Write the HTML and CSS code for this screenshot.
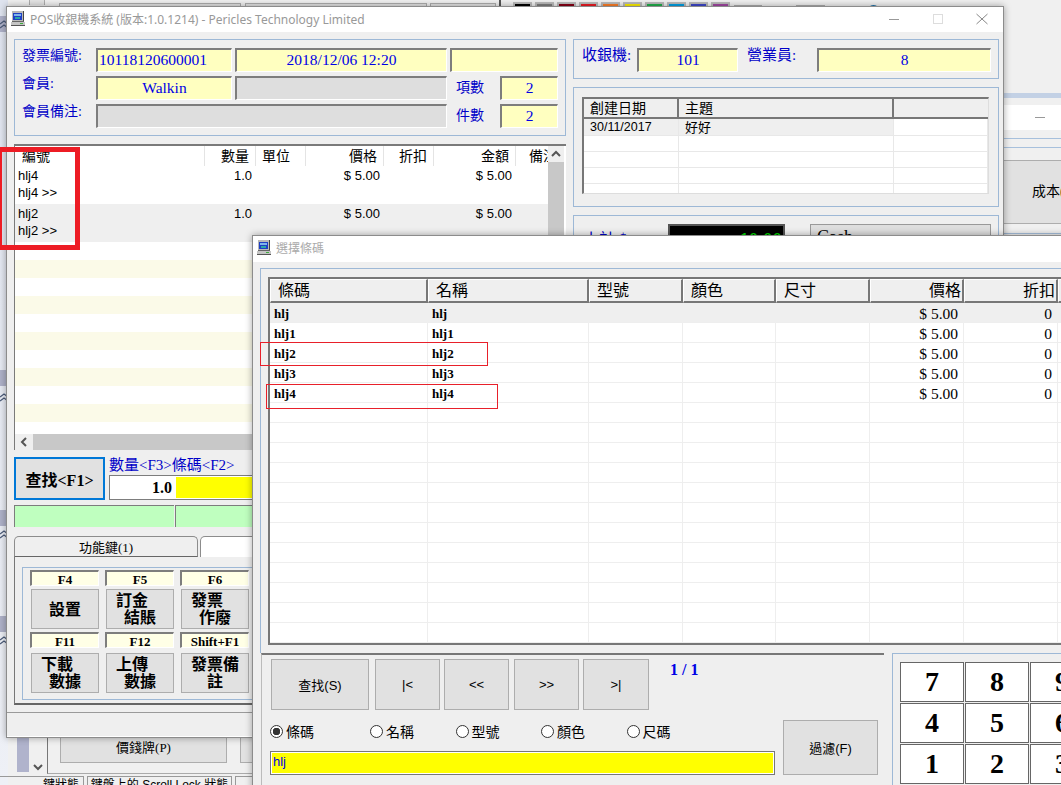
FILE: index.html
```html
<!DOCTYPE html>
<html lang="zh-Hant">

<head>
    <meta charset="UTF-8">
    <title>POS收銀機系統</title>
    <link rel="stylesheet" href="styles.css">
</head>

<body>
    <div class="desktop">

        <!-- Ventana de fondo -->
        <div class="bg-top">
            <span class="bg-box bg-chev"></span>
            <span class="bg-box bg-b1"></span>
            <span class="bg-box bg-b2"></span>
            <span class="bg-box bg-b3"></span>
            <span class="bg-divider"></span>
            <div class="swatches">
                <i style="background:#000"></i><i style="background:#7f7f7f"></i><i style="background:#880015"></i><i style="background:#ed1c24"></i><i style="background:#ff7f27"></i><i style="background:#fff200"></i><i style="background:#22b14c"></i><i style="background:#00a2e8"></i><i style="background:#3f48cc"></i><i style="background:#a349a4"></i>
            </div>
            <span class="bg-box bg-b4"></span>
            <span class="bg-box bg-b5"></span>
            <span class="bg-dot"></span>
        </div>

        <div class="bg-left">
            <span class="bg-band band-1"></span>
            <span class="bg-band band-2"></span>
            <span class="bg-band band-3"></span>
            <span class="bg-band band-4"></span>
            <svg class="bg-chevs chev-1" width="8" height="10" viewBox="0 0 8 10"><path d="M0 4 L4 1 L8 4 M0 8 L4 5 L8 8" fill="none" stroke="#4a5a78" stroke-width="1.2" /></svg>
            <svg class="bg-chevs chev-2" width="8" height="10" viewBox="0 0 8 10"><path d="M0 4 L4 1 L8 4 M0 8 L4 5 L8 8" fill="none" stroke="#4a5a78" stroke-width="1.2" /></svg>
            <svg class="bg-chevs chev-3" width="8" height="10" viewBox="0 0 8 10"><path d="M0 4 L4 1 L8 4 M0 8 L4 5 L8 8" fill="none" stroke="#4a5a78" stroke-width="1.2" /></svg>
            <svg class="bg-chevs chev-4" width="8" height="10" viewBox="0 0 8 10"><path d="M0 4 L4 1 L8 4 M0 8 L4 5 L8 8" fill="none" stroke="#4a5a78" stroke-width="1.2" /></svg>
        </div>

        <div class="bg-right">
            <div class="bg-right-stripe"></div>
            <div class="bg-right-title"><span class="bg-min"></span></div>
            <div class="bg-right-lines"></div>
            <div class="bg-right-button">成本(C)</div>
            <div class="bg-right-line"></div>
        </div>

        <div class="bg-bottom">
            <span class="bg-scroll"></span>
            <svg class="bg-scroll-arrow" width="10" height="8" viewBox="0 0 10 8"><polyline points="1,2 5,6 9,2" fill="none" stroke="#555" stroke-width="2" /></svg>
            <button class="bg-btn bg-btn-a">價錢牌(P)</button>
            <button class="bg-btn bg-btn-b"></button>
            <div class="bg-tabs">
                <span class="bg-tab tab-a">.鍵狀態</span>
                <span class="bg-tab tab-b">鍵盤上的 Scroll Lock 狀態</span>
                <span class="bg-tab tab-c"></span>
            </div>
        </div>

        <!-- Ventana principal -->
        <div class="window pos-window">
            <div class="titlebar">
                <svg class="app-icon" width="16" height="16" viewBox="0 0 16 16">
                    <rect x="2" y="0" width="12" height="11" fill="#b8b8b8" />
                    <rect x="13" y="0" width="1" height="11" fill="#444" />
                    <rect x="2" y="10" width="12" height="1" fill="#666" />
                    <rect x="3" y="2" width="9" height="7" fill="#1e3fc4" />
                    <rect x="4" y="3" width="7" height="2" fill="#7fb4ea" />
                    <rect x="5" y="6" width="5" height="2" fill="#2aa6a6" />
                    <rect x="1" y="11" width="14" height="4" fill="#c4c4c4" />
                    <rect x="1" y="14" width="14" height="1" fill="#555" />
                    <rect x="10" y="12" width="3" height="1" fill="#3fae3f" />
                </svg>
                <span class="title-text">POS收銀機系統 (版本:1.0.1214) - Pericles Technology Limited</span>
                <div class="title-controls">
                    <svg width="12" height="12" viewBox="0 0 12 12"><line x1="1" y1="6.5" x2="11" y2="6.5" stroke="#999" /></svg>
                    <svg width="12" height="12" viewBox="0 0 12 12"><rect x="1.5" y="1.5" width="9" height="9" fill="none" stroke="#ddd" /></svg>
                    <svg width="12" height="12" viewBox="0 0 12 12"><path d="M0.5 1 L11.5 11 M11.5 1 L0.5 11" stroke="#888" fill="none" /></svg>
                </div>
            </div>

            <div class="pos-body">
                <div class="pos-left">
                    <div class="panel invoice-panel">
                        <div class="inv-row">
                            <span class="lbl lbl-main">發票編號:</span>
                            <span class="field yellow w-136 left">10118120600001</span>
                            <span class="field yellow w-212">2018/12/06 12:20</span>
                            <span class="field yellow w-108"></span>
                        </div>
                        <div class="inv-row">
                            <span class="lbl lbl-main">會員:</span>
                            <span class="field yellow w-136">Walkin</span>
                            <span class="field gray w-212"></span>
                            <span class="lbl lbl-count">項數</span>
                            <span class="field yellow w-58">2</span>
                        </div>
                        <div class="inv-row">
                            <span class="lbl lbl-main">會員備注:</span>
                            <span class="field gray w-351"></span>
                            <span class="lbl lbl-count">件數</span>
                            <span class="field yellow w-58">2</span>
                        </div>
                    </div>

                    <div class="sale-frame">
                        <div class="sale-main">
                            <div class="sale-list">
                                <table class="sale-table">
                                    <colgroup>
                                        <col style="width:190px"><col style="width:51px"><col style="width:50px"><col style="width:78px"><col style="width:50px"><col style="width:82px"><col style="width:32px">
                                    </colgroup>
                                    <tr>
                                        <th class="th-code">編號</th>
                                        <th class="num">數量</th>
                                        <th>單位</th>
                                        <th class="num">價格</th>
                                        <th class="num">折扣</th>
                                        <th class="num">金額</th>
                                        <th class="th-last">備注</th>
                                    </tr>
                                    <tr class="sale-row">
                                        <td>hlj4<br>hlj4 &gt;&gt;</td>
                                        <td class="num">1.0</td>
                                        <td></td>
                                        <td class="num">$ 5.00</td>
                                        <td></td>
                                        <td class="num">$ 5.00</td>
                                        <td></td>
                                    </tr>
                                    <tr class="sale-row alt">
                                        <td>hlj2<br>hlj2 &gt;&gt;</td>
                                        <td class="num">1.0</td>
                                        <td></td>
                                        <td class="num">$ 5.00</td>
                                        <td></td>
                                        <td class="num">$ 5.00</td>
                                        <td></td>
                                    </tr>
                                </table>
                                <div class="sale-stripes"></div>
                            </div>
                            <div class="vbar">
                                <div class="vbar-up">
                                    <svg width="10" height="8" viewBox="0 0 10 8"><polyline points="1,6 5,2 9,6" fill="none" stroke="#555" stroke-width="2" /></svg>
                                </div>
                            </div>
                        </div>
                        <div class="hbar">
                            <div class="hbar-left">
                                <svg width="8" height="10" viewBox="0 0 8 10"><polyline points="6,1 2,5 6,9" fill="none" stroke="#555" stroke-width="2" /></svg>
                            </div>
                        </div>
                    </div>

                    <div class="search-row">
                        <button class="search-btn">查找<span class="f-key">&lt;F1&gt;</span></button>
                        <div class="search-fields">
                            <div class="search-labels">數量<span class="f-small">&lt;F3&gt;</span>條碼<span class="f-small">&lt;F2&gt;</span></div>
                            <div class="search-inputs">
                                <span class="qty-input">1.0</span>
                                <span class="code-input"></span>
                            </div>
                        </div>
                    </div>

                    <div class="green-row">
                        <span class="green-cell first"></span>
                        <span class="green-cell"></span>
                    </div>

                    <div class="tabs">
                        <span class="tab tab-active">功能鍵(1)</span>
                        <span class="tab tab-other"></span>
                    </div>
                    <div class="tab-panel">
                        <div class="key-panel">
                            <div class="key-grid">
                                <span class="key-label">F4</span>
                                <span class="key-label">F5</span>
                                <span class="key-label">F6</span>
                                <button class="key-btn">設置</button>
                                <button class="key-btn">訂金&nbsp;&nbsp;&nbsp;&nbsp;<br>結賬</button>
                                <button class="key-btn">發票&nbsp;&nbsp;&nbsp;&nbsp;<br>作廢</button>
                                <span class="key-label">F11</span>
                                <span class="key-label">F12</span>
                                <span class="key-label">Shift+F1</span>
                                <button class="key-btn">下載&nbsp;&nbsp;&nbsp;&nbsp;<br>數據</button>
                                <button class="key-btn">上傳&nbsp;&nbsp;&nbsp;&nbsp;<br>數據</button>
                                <button class="key-btn">發票備<br>註</button>
                            </div>
                        </div>
                    </div>
                </div>

                <div class="pos-right">
                    <div class="panel cashier-panel">
                        <span class="lbl lbl-cashier">收銀機:</span>
                        <span class="field yellow w-101">101</span>
                        <span class="lbl lbl-staff">營業員:</span>
                        <span class="field yellow w-174">8</span>
                    </div>
                    <div class="panel notes-panel">
                        <table class="notes-table">
                            <colgroup>
                                <col style="width:95px"><col style="width:215px"><col>
                            </colgroup>
                            <tr><th>創建日期</th><th>主題</th><th></th></tr>
                            <tr class="alt"><td class="note-date">30/11/2017</td><td>好好</td><td class="plain"></td></tr>
                            <tr><td></td><td></td><td></td></tr>
                            <tr><td></td><td></td><td></td></tr>
                            <tr><td></td><td></td><td></td></tr>
                            <tr class="cut"><td></td><td></td><td></td></tr>
                        </table>
                    </div>
                    <div class="panel total-panel">
                        <span class="total-label">小計 $</span>
                        <span class="total-box">10.00</span>
                        <span class="pay-box">Cash</span>
                    </div>
                </div>
            </div>

            <div class="statusbar"></div>
        </div>

        <!-- Ventana de selección -->
        <div class="window pick-window">
            <div class="titlebar pick-title">
                <svg class="app-icon" width="16" height="16" viewBox="0 0 16 16">
                    <rect x="2" y="0" width="12" height="11" fill="#b8b8b8" />
                    <rect x="13" y="0" width="1" height="11" fill="#444" />
                    <rect x="2" y="10" width="12" height="1" fill="#666" />
                    <rect x="3" y="2" width="9" height="7" fill="#1e3fc4" />
                    <rect x="4" y="3" width="7" height="2" fill="#7fb4ea" />
                    <rect x="5" y="6" width="5" height="2" fill="#2aa6a6" />
                    <rect x="1" y="11" width="14" height="4" fill="#c4c4c4" />
                    <rect x="1" y="14" width="14" height="1" fill="#555" />
                    <rect x="10" y="12" width="3" height="1" fill="#3fae3f" />
                </svg>
                <span class="title-text">選擇條碼</span>
            </div>

            <div class="pick-body">
                <div class="pick-panel">
                    <div class="pick-frame">
                        <table class="pick-table">
                            <colgroup>
                                <col style="width:158px"><col style="width:161px"><col style="width:94px"><col style="width:93px"><col style="width:94px"><col style="width:94px"><col style="width:94px"><col>
                            </colgroup>
                            <tr>
                                <th>條碼</th><th>名稱</th><th>型號</th><th>顏色</th><th>尺寸</th><th class="num">價格</th><th class="num">折扣</th><th></th>
                            </tr>
                            <tr class="alt"><td class="code">hlj</td><td class="code">hlj</td><td></td><td></td><td></td><td class="num">$ 5.00</td><td class="num">0</td><td></td></tr>
                            <tr><td class="code">hlj1</td><td class="code">hlj1</td><td></td><td></td><td></td><td class="num">$ 5.00</td><td class="num">0</td><td></td></tr>
                            <tr><td class="code">hlj2</td><td class="code">hlj2</td><td></td><td></td><td></td><td class="num">$ 5.00</td><td class="num">0</td><td></td></tr>
                            <tr><td class="code">hlj3</td><td class="code">hlj3</td><td></td><td></td><td></td><td class="num">$ 5.00</td><td class="num">0</td><td></td></tr>
                            <tr><td class="code">hlj4</td><td class="code">hlj4</td><td></td><td></td><td></td><td class="num">$ 5.00</td><td class="num">0</td><td></td></tr>
                            <tr><td></td><td></td><td></td><td></td><td></td><td></td><td></td><td></td></tr>
                            <tr><td></td><td></td><td></td><td></td><td></td><td></td><td></td><td></td></tr>
                            <tr><td></td><td></td><td></td><td></td><td></td><td></td><td></td><td></td></tr>
                            <tr><td></td><td></td><td></td><td></td><td></td><td></td><td></td><td></td></tr>
                            <tr><td></td><td></td><td></td><td></td><td></td><td></td><td></td><td></td></tr>
                            <tr><td></td><td></td><td></td><td></td><td></td><td></td><td></td><td></td></tr>
                            <tr><td></td><td></td><td></td><td></td><td></td><td></td><td></td><td></td></tr>
                            <tr><td></td><td></td><td></td><td></td><td></td><td></td><td></td><td></td></tr>
                            <tr><td></td><td></td><td></td><td></td><td></td><td></td><td></td><td></td></tr>
                            <tr><td></td><td></td><td></td><td></td><td></td><td></td><td></td><td></td></tr>
                            <tr><td></td><td></td><td></td><td></td><td></td><td></td><td></td><td></td></tr>
                            <tr><td></td><td></td><td></td><td></td><td></td><td></td><td></td><td></td></tr>
                        </table>
                    </div>
                </div>

                <div class="pick-bottom">
                    <div class="pick-controls">
                        <div class="nav-row">
                            <button class="sys-btn nav-search">查找(S)</button>
                            <button class="sys-btn nav-first">|&lt;</button>
                            <button class="sys-btn nav-prev">&lt;&lt;</button>
                            <button class="sys-btn nav-next">&gt;&gt;</button>
                            <button class="sys-btn nav-last">&gt;|</button>
                            <span class="page-count">1 / 1</span>
                        </div>
                        <div class="filter-row">
                            <div class="filter-left">
                                <div class="radios">
                                    <label class="radio r-first"><i class="dot checked"></i>條碼</label>
                                    <label class="radio"><i class="dot"></i>名稱</label>
                                    <label class="radio"><i class="dot"></i>型號</label>
                                    <label class="radio"><i class="dot"></i>顏色</label>
                                    <label class="radio"><i class="dot"></i>尺碼</label>
                                </div>
                                <div class="filter-input">hlj</div>
                            </div>
                            <button class="sys-btn filter-btn">過濾(F)</button>
                        </div>
                    </div>
                    <div class="numpad">
                        <button class="num-key">7</button>
                        <button class="num-key">8</button>
                        <button class="num-key">9</button>
                        <button class="num-key">4</button>
                        <button class="num-key">5</button>
                        <button class="num-key">6</button>
                        <button class="num-key">1</button>
                        <button class="num-key">2</button>
                        <button class="num-key">3</button>
                    </div>
                </div>
            </div>
        </div>

        <!-- Marcas rojas -->
        <div class="mark mark-thick"></div>
        <div class="mark mark-thin mark-a"></div>
        <div class="mark mark-thin mark-b"></div>
    </div>
</body>

</html>
```

FILE: styles.css
```css
* {
    box-sizing: border-box;
}

html,
body {
    margin: 0;
    padding: 0;
    width: 1061px;
    height: 785px;
    overflow: hidden;
}

body {
    font-family: "Liberation Serif", "Noto Sans CJK TC", serif;
    color: #000;
    background: #f0f0f0;
}

button {
    font-family: inherit;
    padding: 0;
}

table {
    border-collapse: separate;
    border-spacing: 0;
    table-layout: fixed;
}

.desktop {
    position: relative;
    width: 1061px;
    height: 785px;
    overflow: hidden;
    background: #f0f0f0;
}

/* Ventana de fondo */
.bg-top {
    position: absolute;
    left: 0;
    top: 0;
    width: 1061px;
    height: 8px;
    background: #f0f0f0;
}

.bg-box {
    position: absolute;
    top: 3px;
    height: 5px;
    border: 1px solid #adadad;
    background: #e4e4e4;
}

.bg-chev { left: 29px; width: 16px; top: 0; border-width: 0 1px; }
.bg-b1 { left: 59px; width: 182px; }
.bg-b2 { left: 245px; width: 182px; }
.bg-b3 { left: 430px; width: 66px; }
.bg-b4 { left: 734px; width: 28px; top: 5px; }
.bg-b5 { left: 796px; width: 29px; top: 5px; }

.bg-divider {
    position: absolute;
    left: 499px;
    top: 0;
    width: 2px;
    height: 8px;
    background: #555;
}

.swatches {
    position: absolute;
    left: 513px;
    top: 2px;
    display: flex;
    gap: 3px;
}

.swatches i {
    width: 19px;
    height: 8px;
    border: 2px solid #bbb;
    border-bottom: 0;
}

.bg-dot {
    position: absolute;
    left: 867px;
    top: 5px;
    width: 13px;
    height: 13px;
    border-radius: 50%;
    background: #1a6ea8;
}

.bg-left {
    position: absolute;
    left: 0;
    top: 0;
    width: 8px;
    height: 785px;
    background: linear-gradient(#dfe4ef, #eef0f6);
}

.bg-band {
    position: absolute;
    left: 0;
    width: 8px;
    height: 16px;
    background: #aeb1c8;
}

.band-1 { top: 16px; }
.band-2 { top: 370px; }
.band-3 { top: 510px; }
.band-4 { top: 616px; }

.bg-chevs {
    position: absolute;
    left: 0;
}

.chev-1 { top: 20px; }
.chev-2 { top: 393px; }
.chev-3 { top: 530px; }
.chev-4 { top: 636px; }

.bg-right {
    position: absolute;
    left: 1000px;
    top: 0;
    width: 61px;
    height: 300px;
    background: #f0f0f0;
}

.bg-right-stripe {
    margin-top: 93px;
    height: 5px;
    background: #c3d1e5;
}

.bg-right-title {
    display: flex;
    align-items: center;
    margin-top: 7px;
    height: 25px;
    padding-left: 35px;
    background: #fff;
}

.bg-min {
    width: 10px;
    height: 1px;
    background: #999;
}

.bg-right-lines {
    height: 10px;
    margin-top: 8px;
    border-top: 1px solid #a7c0dc;
    border-bottom: 1px solid #a7c0dc;
}

.bg-right-button {
    margin-top: 12px;
    height: 64px;
    line-height: 62px;
    padding-left: 32px;
    font-size: 14px;
    white-space: nowrap;
    overflow: hidden;
    background: #e1e1e1;
    border-top: 1px solid #adadad;
    border-bottom: 1px solid #adadad;
}

.bg-right-line {
    height: 1px;
    margin-top: 9px;
    background: #a7c0dc;
}

.bg-bottom {
    position: absolute;
    left: 0;
    top: 730px;
    width: 300px;
    height: 55px;
}

.bg-scroll {
    position: absolute;
    left: 17px;
    top: 0;
    width: 12px;
    height: 42px;
    background: #b0b3cc;
}

.bg-scroll-arrow {
    position: absolute;
    left: 33px;
    top: 33px;
}

.bg-bottom::before {
    content: "";
    position: absolute;
    left: 47px;
    top: 0;
    width: 253px;
    height: 43px;
    border-left: 1px solid #777;
    border-bottom: 1px solid #aaa;
}

.bg-btn {
    position: absolute;
    top: 0;
    height: 33px;
    font-size: 13px;
    background: #e1e1e1;
    border: 1px solid #adadad;
}

.bg-btn-a { left: 60px; width: 167px; }
.bg-btn-b { left: 240px; width: 30px; }

.bg-tabs {
    position: absolute;
    left: 0;
    top: 46px;
    display: flex;
    gap: 3px;
}

.bg-tab {
    height: 20px;
    padding-top: 1px;
    font-family: "Liberation Sans", "Noto Sans CJK TC", sans-serif;
    font-size: 12px;
    line-height: 14px;
    white-space: nowrap;
    text-align: center;
    border: 1px solid #999;
}

.tab-a { width: 84px; margin-left: 0; border-left: 0; text-align: right; padding-right: 4px; }
.tab-b { width: 145px; }
.tab-c { width: 30px; }

/* Ventanas */
.window {
    position: absolute;
    display: flex;
    flex-direction: column;
    background: #efefef;
    border: 1px solid #8c8c8c;
    box-shadow: 0 0 7px rgba(0, 0, 0, 0.35);
}

.pos-window {
    left: 6px;
    top: 6px;
    width: 998px;
    height: 732px;
}

.pick-window {
    left: 252px;
    top: 235px;
    width: 900px;
    height: 600px;
}

.titlebar {
    display: flex;
    flex: none;
    align-items: center;
    gap: 4px;
    height: 25px;
    padding: 0 0 2px 3px;
    background: #fff;
}

.title-text {
    font-family: "Noto Sans", "Noto Sans CJK TC", sans-serif;
    font-size: 12px;
    color: #999;
    white-space: nowrap;
}

.title-controls {
    display: flex;
    gap: 32px;
    margin-left: auto;
    margin-right: 15px;
}

.pick-title {
    height: 26px;
}

.pick-title .title-text {
    color: #aaa;
}

.pos-body {
    display: flex;
    flex: 1;
    gap: 7px;
    padding: 7px 4px 0 7px;
    min-height: 0;
}

.pos-left {
    flex: none;
    width: 552px;
}

.pos-right {
    flex: none;
    width: 426px;
}

.panel {
    border: 1px solid #9db8d6;
    background: #efefef;
}

/* Campos */
.field {
    display: block;
    flex: none;
    height: 24px;
    line-height: 20px;
    font-size: 15.5px;
    color: #0000e6;
    text-align: center;
    border-top: 2px solid #7d7d7d;
    border-left: 2px solid #7d7d7d;
    border-right: 1px solid #fff;
    border-bottom: 1px solid #fff;
    overflow: hidden;
    white-space: nowrap;
}

.yellow { background: #ffffc0; }
.gray { background: #dedede; }
.left { text-align: left; padding-left: 1px; }
.w-58 { width: 58px; }
.w-101 { width: 101px; }
.w-108 { width: 108px; }
.w-136 { width: 136px; }
.w-174 { width: 174px; }
.w-212 { width: 212px; }
.w-351 { width: 351px; }

.lbl {
    flex: none;
    font-size: 14px;
    line-height: 15px;
    color: #0000c8;
    white-space: nowrap;
}

.lbl-main {
    width: 71px;
    align-self: flex-start;
}

.lbl-count {
    width: 47px;
    padding-left: 6px;
    padding-top: 4px;
}

.invoice-panel {
    height: 97px;
    padding: 8px 7px 0;
}

.inv-row {
    display: flex;
    gap: 3px;
    height: 24px;
    margin-bottom: 4px;
}

.cashier-panel {
    display: flex;
    height: 40px;
    padding: 8px 7px 0 8px;
}

.lbl-cashier { width: 55px; font-size: 15px; }
.lbl-staff { width: 79px; padding-left: 9px; font-size: 15px; }

.notes-panel {
    height: 120px;
    margin-top: 8px;
    padding: 9px 8px;
}

.notes-table {
    width: 407px;
    background: #fff;
    border-top: 2px solid #777;
    border-left: 2px solid #777;
    border-right: 1px solid #ddd;
    border-bottom: 1px solid #ddd;
    font-size: 13px;
}

.notes-table th {
    height: 20px;
    padding: 0 0 0 6px;
    font-weight: normal;
    font-size: 14px;
    line-height: 17px;
    text-align: left;
    background: #efefef;
    border-right: 2px solid #777;
    border-bottom: 2px solid #777;
}

.notes-table th:last-child {
    border-right: 0;
}

.notes-table td {
    height: 16px;
    padding: 0 0 0 6px;
    line-height: 15px;
    border-right: 1px solid #e8e8e8;
    border-bottom: 1px solid #e8e8e8;
}

.notes-table .alt td {
    height: 17px;
    background: #efefef;
}

.notes-table .alt td.plain {
    background: #fff;
}

.notes-table .cut td {
    height: 9px;
    border-bottom: 0;
}

.note-date {
    font-family: "Liberation Sans", sans-serif;
    font-size: 12.5px;
}

.total-panel {
    display: flex;
    height: 200px;
    margin-top: 8px;
    padding: 8px 7px 0 9px;
}

.total-label {
    width: 85px;
    padding-top: 2px;
    font-size: 16px;
    color: #0000c8;
}

.total-box {
    width: 117px;
    height: 30px;
    padding: 3px 1px 0 0;
    font-size: 19px;
    font-weight: bold;
    line-height: 22px;
    text-align: right;
    color: #00d800;
    background: #000;
    border: 2px solid #555;
}

.pay-box {
    width: 181px;
    height: 40px;
    margin-left: 25px;
    padding: 2px 0 0 6px;
    font-size: 18px;
    background: #dedede;
    border: 1px solid #999;
}

/* Tabla de venta */
.sale-frame {
    display: flex;
    flex-direction: column;
    height: 306px;
    margin-top: 8px;
    background: #fff;
    border-top: 2px solid #7a7a7a;
    border-left: 1px solid #7a7a7a;
}

.sale-main {
    display: flex;
    flex: 1;
    min-height: 0;
}

.sale-list {
    flex: none;
    width: 533px;
    overflow: hidden;
}

.sale-table {
    width: 533px;
    font-family: "Liberation Sans", "Noto Sans CJK TC", sans-serif;
    font-size: 13px;
}

.sale-table th {
    height: 20px;
    padding: 0 6px;
    font-weight: normal;
    font-size: 14px;
    line-height: 18px;
    text-align: left;
    white-space: nowrap;
    overflow: hidden;
    border-right: 1px solid #e4e4e4;
}

.sale-table th.num { text-align: right; }
.sale-table .th-code { padding-left: 7px; }
.sale-table .th-last { padding-left: 13px; padding-right: 0; border-right: 0; }

.sale-table td {
    height: 38px;
    padding: 1px 0 0 3px;
    line-height: 17px;
    vertical-align: top;
}

.sale-table td.num {
    padding: 1px 4px 0 0;
    text-align: right;
}

.sale-row.alt td {
    background: #efefef;
}

.sale-stripes {
    height: 192px;
    background: repeating-linear-gradient(#fff 0, #fff 18px, #fbfae8 18px, #fbfae8 36px);
}

.vbar {
    flex: none;
    width: 16px;
    margin-right: 2px;
    background: #c8c8c8;
}

.vbar-up {
    display: flex;
    align-items: center;
    justify-content: center;
    height: 16px;
    background: #efefef;
}

.hbar {
    flex: none;
    height: 16px;
    background: #c8c8c8;
}

.hbar-left {
    display: flex;
    align-items: center;
    justify-content: center;
    width: 18px;
    height: 16px;
    background: #efefef;
}

/* Búsqueda */
.search-row {
    display: flex;
    height: 43px;
    margin-top: 7px;
}

.search-btn {
    flex: none;
    width: 91px;
    height: 43px;
    font-size: 16px;
    font-weight: bold;
    background: #e1e1e1;
    border: 2px solid #0078d7;
}

.f-key { font-size: 16px; }

.search-fields {
    flex: 1;
    padding-left: 4px;
}

.search-labels {
    height: 18px;
    font-size: 15px;
    line-height: 16px;
    color: #0000c8;
    white-space: nowrap;
}

.f-small { font-size: 15px; }

.search-inputs {
    display: flex;
    gap: 1px;
    height: 25px;
    border: 1px solid #7d7d7d;
    background: #fff;
}

.qty-input {
    width: 64px;
    padding-right: 2px;
    font-size: 16px;
    font-weight: bold;
    line-height: 23px;
    text-align: right;
}

.code-input {
    flex: 1;
    margin: 1px;
    background: #ff0;
}

.green-row {
    display: flex;
    gap: 1px;
    height: 22px;
    margin-top: 5px;
}

.green-cell {
    flex: 1;
    background: #bfffbf;
    border-top: 1px solid #7d7d7d;
    border-left: 1px solid #7d7d7d;
}

.green-cell.first {
    flex: none;
    width: 160px;
}

/* Pestañas */
.tabs {
    display: flex;
    gap: 1px;
    height: 21px;
    margin-top: 9px;
}

.tab {
    height: 21px;
    font-size: 13px;
    line-height: 21px;
    text-align: center;
    border: 1px solid #8c8c8c;
    border-bottom: 0;
    border-radius: 5px 5px 0 0;
}

.tab-active {
    width: 184px;
    border-bottom: 1px solid #666;
}

.tab-other {
    flex: 1;
    background: #fff;
    margin-left: 1px;
}

.tab-panel {
    height: 148px;
    padding: 10px 7px 5px;
    background: #efefef;
    border-left: 1px solid #777;
    border-bottom: 2px solid #666;
}

.key-panel {
    height: 133px;
    padding: 2px 7px 0;
    border: 1px solid #9db8d6;
}

.key-grid {
    display: grid;
    grid-template-columns: repeat(3, 69px);
    grid-template-rows: 16px 40px 18px 40px;
    column-gap: 6px;
    row-gap: 3px;
}

.key-label {
    display: block;
    height: 16px;
    font-size: 13px;
    font-weight: bold;
    line-height: 15px;
    text-align: center;
    white-space: nowrap;
    background: #ffffe6;
    border-top: 2px solid #7d7d7d;
    border-left: 2px solid #7d7d7d;
    border-right: 1px solid #fff;
    border-bottom: 1px solid #fff;
}

.key-btn {
    height: 40px;
    margin-left: 1px;
    font-size: 16px;
    font-weight: bold;
    line-height: 17px;
    white-space: nowrap;
    background: #e1e1e1;
    border: 1px solid #adadad;
}

.statusbar {
    flex: none;
    height: 25px;
    border-top: 1px solid #9a9a9a;
    box-shadow: inset 0 -1px 0 #fff;
}

/* Ventana de selección */
.pick-body {
    flex: 1;
    padding-top: 6px;
}

.pick-panel {
    height: 385px;
    margin-left: 7px;
    padding: 8px 0 0 7px;
    border-left: 1px solid #9db8d6;
    border-top: 1px solid #9db8d6;
}

.pick-frame {
    height: 368px;
    background: #fff;
    border-top: 2px solid #777;
    border-left: 2px solid #777;
    border-bottom: 2px solid #777;
}

.pick-table {
    width: 900px;
    font-size: 15.5px;
}

.pick-table th {
    height: 24px;
    padding: 0 0 0 7px;
    font-weight: normal;
    font-size: 16px;
    line-height: 19px;
    text-align: left;
    background: #efefef;
    border-top: 1px solid #fff;
    border-left: 1px solid #fff;
    border-right: 2px solid #777;
    border-bottom: 2px solid #777;
}

.pick-table th.num {
    padding: 0 1px 0 0;
    text-align: right;
}

.pick-table td {
    height: 20px;
    padding: 1px 0 0 4px;
    line-height: 17px;
    white-space: nowrap;
    border-right: 1px solid #eee;
    border-bottom: 1px solid #eee;
}

.pick-table td.code {
    font-size: 13px;
    font-weight: bold;
}

.pick-table td.num {
    padding: 1px 5px 0 0;
    text-align: right;
}

.pick-table .alt td {
    background: #efefef;
    border-right-color: #efefef;
}

.pick-bottom {
    display: flex;
}

.pick-controls {
    flex: none;
    width: 623px;
    height: 140px;
    margin-left: 8px;
    padding: 4px 0 0 9px;
    border-top: 2px solid #777;
    border-left: 1px solid #bbb;
}

.nav-row {
    display: flex;
    height: 51px;
}

.sys-btn {
    flex: none;
    height: 51px;
    font-family: "Liberation Sans", "Noto Sans CJK TC", sans-serif;
    font-size: 13px;
    background: #e1e1e1;
    border: 1px solid #adadad;
}

.nav-search { width: 98px; }
.nav-first { width: 65px; margin-left: 6px; }
.nav-prev { width: 65px; margin-left: 4px; }
.nav-next { width: 65px; margin-left: 5px; }
.nav-last { width: 66px; margin-left: 4px; }

.page-count {
    margin-left: 21px;
    font-size: 16px;
    font-weight: bold;
    line-height: 21px;
    color: #0000e6;
}

.filter-row {
    display: flex;
    gap: 8px;
    margin: 10px 0 0 -1px;
}

.filter-left {
    flex: none;
    width: 505px;
}

.radios {
    display: flex;
    height: 22px;
    align-items: center;
    margin-bottom: 9px;
}

.radio {
    display: flex;
    align-items: center;
    gap: 3px;
    width: 85.5px;
    font-size: 14px;
}

.r-first {
    width: 100px;
}

.dot {
    display: block;
    flex: none;
    width: 13px;
    height: 13px;
    background: #fff;
    border: 1px solid #333;
    border-radius: 50%;
}

.dot.checked {
    background: radial-gradient(circle, #333 0, #333 3.5px, #fff 4px);
}

.filter-input {
    height: 24px;
    padding-left: 2px;
    font-family: "Liberation Sans", sans-serif;
    font-size: 13px;
    line-height: 20px;
    color: #0000e6;
    background: #ff0;
    border: 1px solid #777;
    box-shadow: inset 0 0 0 1px #fff;
}

.filter-btn {
    width: 95px;
    height: 55px;
}

.numpad {
    display: grid;
    flex: none;
    grid-template-columns: repeat(3, 64px);
    grid-template-rows: repeat(3, 40px);
    gap: 1px;
    width: 230px;
    height: 140px;
    margin-left: 8px;
    padding: 8px 0 0 7px;
    border-top: 1px solid #9db8d6;
    border-left: 1px solid #9db8d6;
}

.num-key {
    font-family: "Liberation Serif", serif;
    font-size: 28px;
    font-weight: bold;
    background: #fff;
    border: 1px solid #666;
}

/* Marcas rojas */
.mark {
    position: absolute;
    pointer-events: none;
}

.mark-thick {
    left: -3px;
    top: 147px;
    width: 83px;
    height: 103px;
    border: 5px solid #ed1c24;
}

.mark-thin {
    border: 1px solid #e8202a;
}

.mark-a {
    left: 260px;
    top: 342px;
    width: 228px;
    height: 24px;
}

.mark-b {
    left: 266px;
    top: 384px;
    width: 232px;
    height: 25px;
}
```
